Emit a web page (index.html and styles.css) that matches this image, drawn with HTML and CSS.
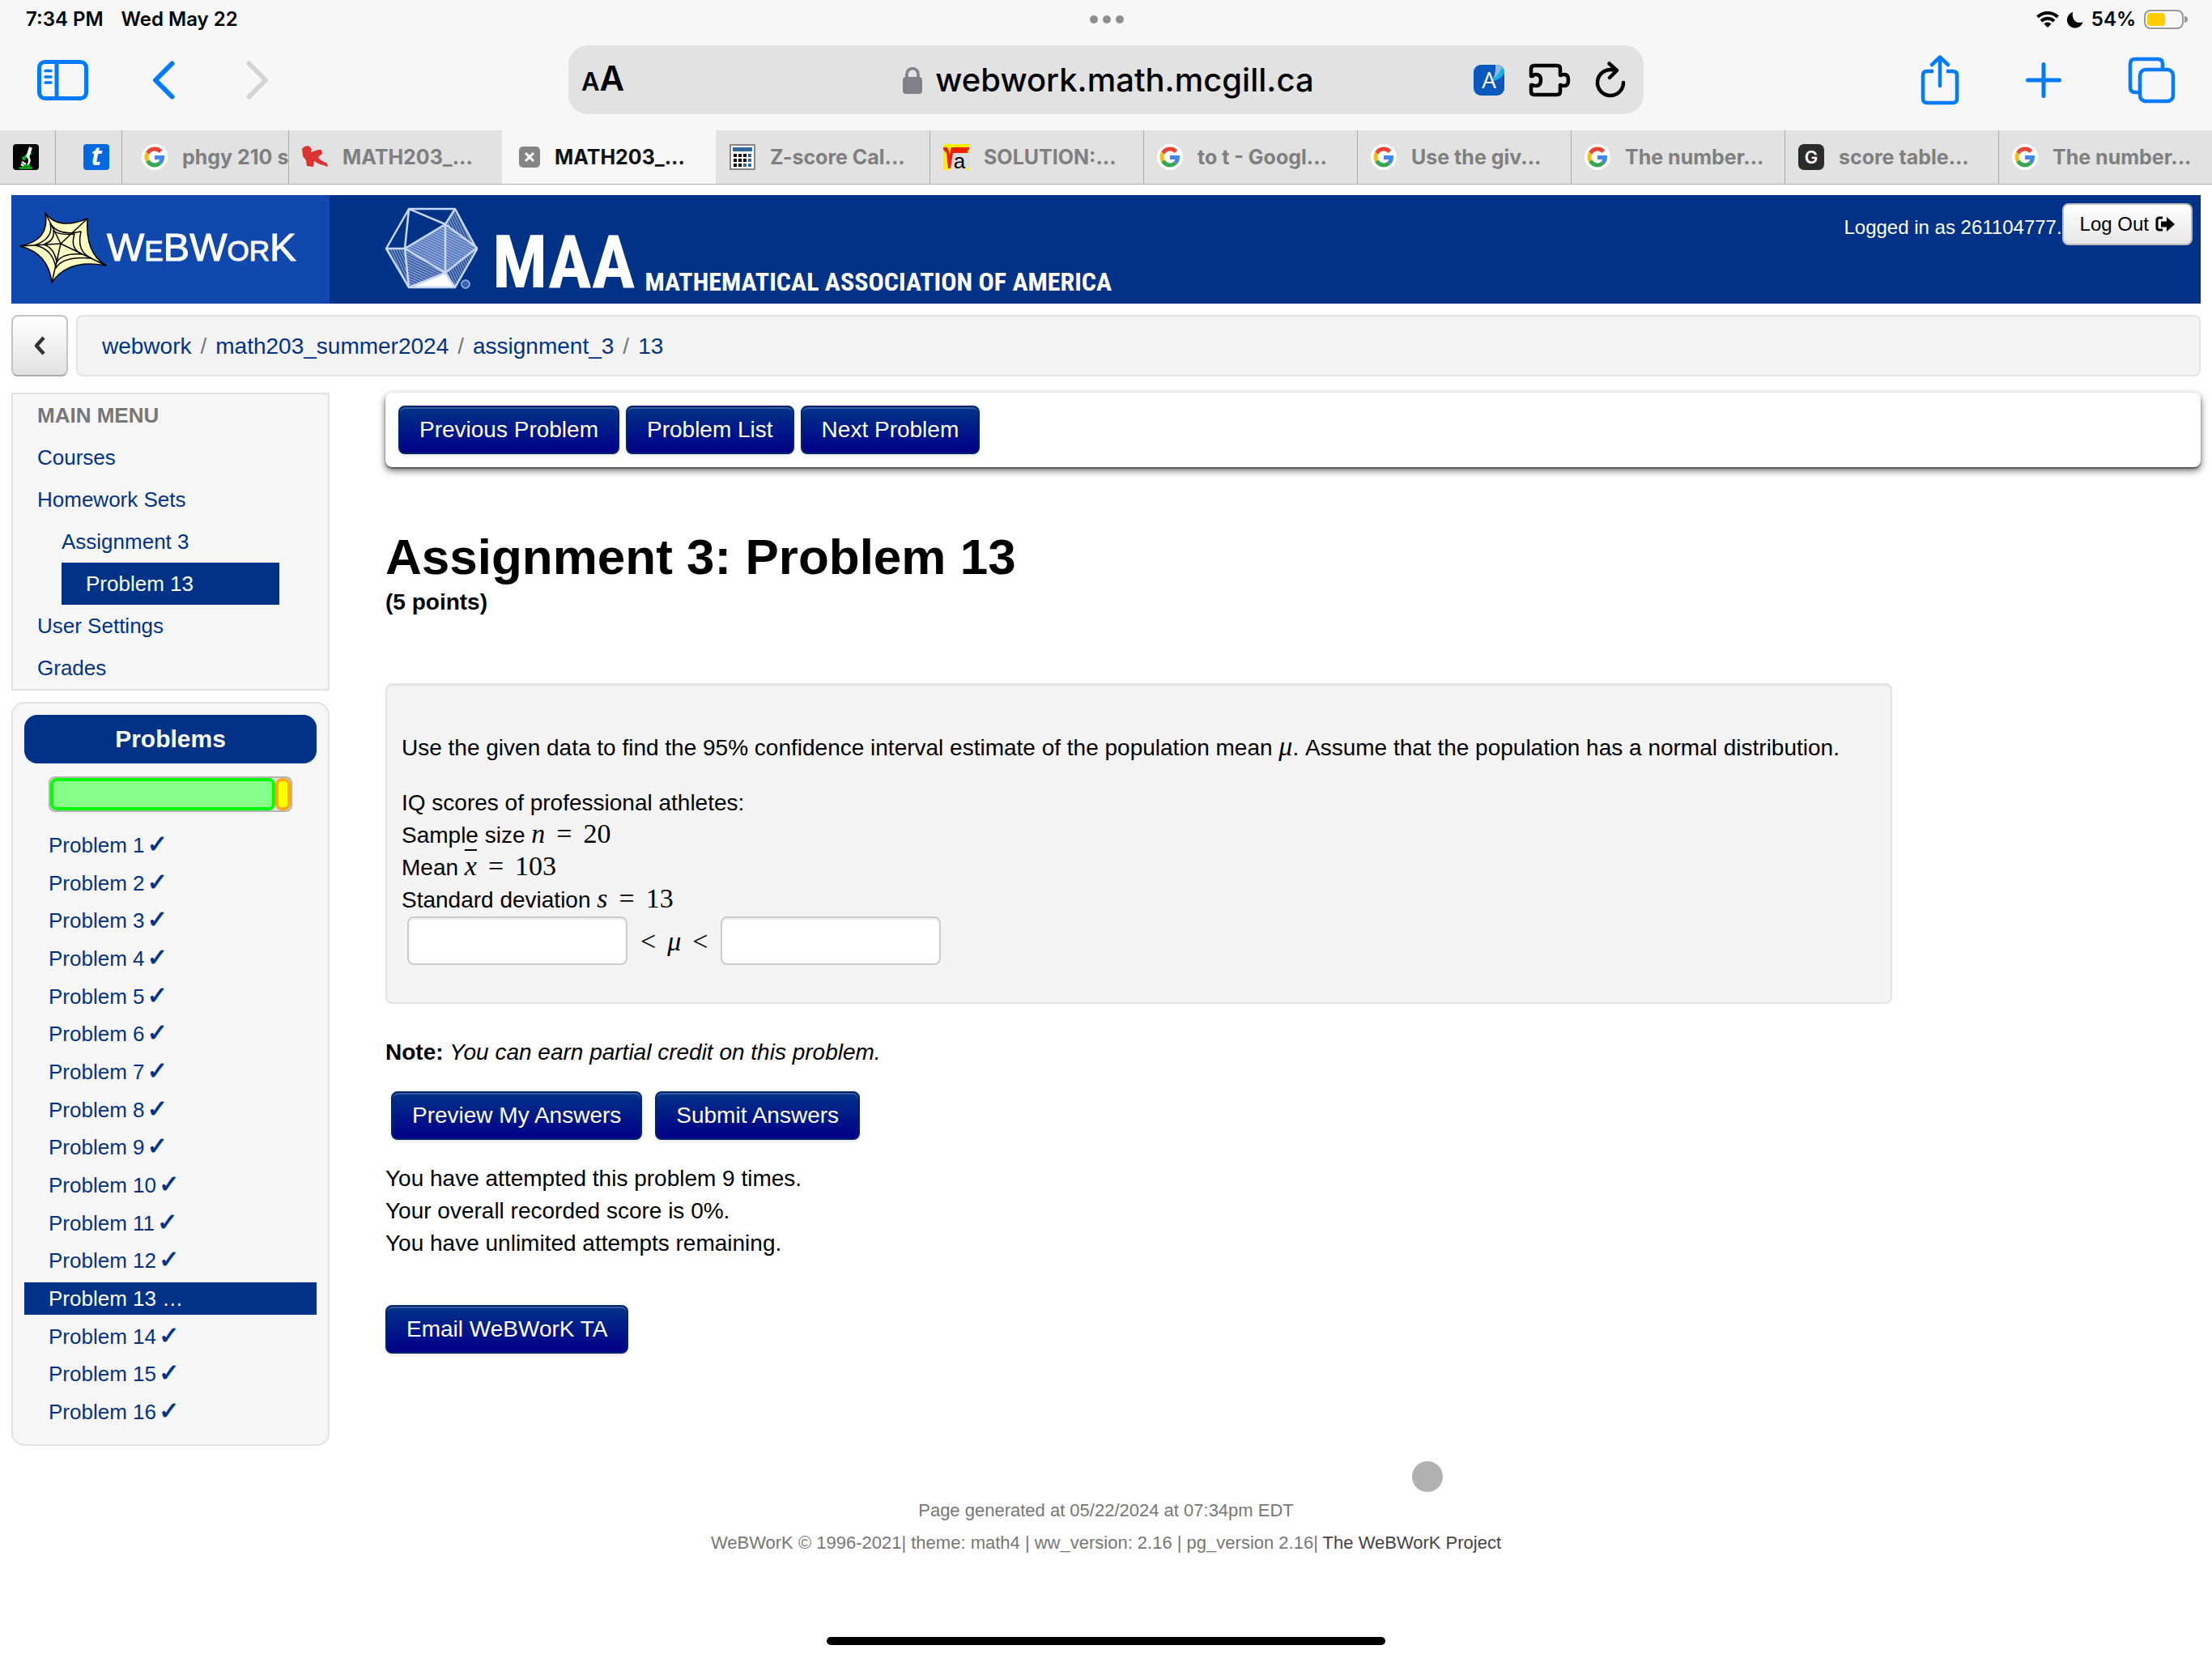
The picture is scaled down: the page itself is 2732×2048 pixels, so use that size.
FILE: index.html
```html
<!DOCTYPE html>
<html lang="en">
<head>
<meta charset="utf-8">
<title>WeBWorK : math203_summer2024 : assignment_3 : 13</title>
<link rel="stylesheet" href="styles.css">
</head>
<body>
<svg class="defs" aria-hidden="true">
  <symbol id="google" viewBox="0 0 32 32">
    <circle cx="16" cy="16" r="16" fill="#fff"/>
    <g fill="none" stroke-width="5">
      <path d="M23.5 9.2A10 10 0 0 0 7.3 11.2" stroke="#ea4335"/>
      <path d="M7.3 11.2A10 10 0 0 0 7.3 20.8" stroke="#fbbc05"/>
      <path d="M7.3 20.8A10 10 0 0 0 22.6 23.4" stroke="#34a853"/>
      <path d="M22.6 23.4A9.600 9.600 0 0 0 25.500 16.400H16" stroke="#4285f4"/>
    </g>
  </symbol>
</svg>

<header class="browser">
  <div class="status">
    <div class="clock"><span>7:34 PM</span><span>Wed May 22</span></div>
    <div class="dots"><i></i><i></i><i></i></div>
    <div class="indicators">
      <svg width="28" height="20" viewBox="0 0 28 20"><g fill="none" stroke="#000" stroke-width="4"><path d="M1.500 7A18 18 0 0 1 26.500 7"/><path d="M6 12A11.500 11.500 0 0 1 22 12"/></g><path d="M14 20l-4.500-4.600a6.500 6.500 0 0 1 9 0z"/></svg>
      <svg width="20" height="20" viewBox="0 0 20 20"><path d="M7 1A10 10 0 1 0 19.500 13.500Q12 15 9 11 6 7 7 1z"/></svg>
      <span>54%</span>
      <svg width="54" height="24" viewBox="0 0 54 24"><rect x="1" y="1" width="47" height="22" rx="7" fill="none" stroke="#999" stroke-width="2"/><rect x="4" y="4" width="22" height="16" rx="4" fill="#fc0"/><path d="M50 8a4 4 0 0 1 0 8z" fill="#999"/></svg>
    </div>
  </div>
  <div class="toolbar">
    <div class="tools">
      <button class="tool" aria-label="Sidebar"><svg width="64" height="50" viewBox="0 0 64 50"><g fill="none" stroke="#007aff" stroke-width="5"><rect x="2.500" y="2.500" width="58" height="45" rx="7"/><path d="M24 2v46"/></g><path d="M10 13.500h7M10 21h7M10 28h7" stroke="#007aff" stroke-width="3.500" stroke-linecap="round"/></svg></button>
      <button class="tool" aria-label="Back"><svg width="28" height="48" viewBox="0 0 28 48"><path d="M24.500 3.500L4 24l20.500 20.500" fill="none" stroke="#007aff" stroke-width="6" stroke-linecap="round" stroke-linejoin="round"/></svg></button>
      <button class="tool" aria-label="Forward" disabled><svg width="28" height="48" viewBox="0 0 28 48"><path d="M3.500 3.500L24 24 3.500 44.500" fill="none" stroke="#d4d4d6" stroke-width="6" stroke-linecap="round" stroke-linejoin="round"/></svg></button>
    </div>
    <div class="address">
      <button class="tool reader" aria-label="Page settings"><span class="small-a">A</span><span class="big-a">A</span></button>
      <div class="host">
        <svg width="24" height="34" viewBox="0 0 24 34"><rect y="13" width="24" height="21" rx="4" fill="#808086"/><path d="M5 15V9.500a7 7 0 0 1 14 0V15" fill="none" stroke="#808086" stroke-width="3.500"/></svg>
        <span>webwork.math.mcgill.ca</span>
      </div>
      <div class="extras">
        <svg width="38" height="38" viewBox="0 0 38 38"><rect width="38" height="38" rx="9" fill="#0a57bd"/><path d="M27 0h2a9 9 0 0 1 9 9v1q-5 9-15 10Q28 11 27 0z" fill="#12b5ea"/><path d="M27 0h2q4 0 6 3-3 9-11 14 4-8 3-17z" fill="#8fb9d8"/><text x="19" y="29" class="ext-letter">A</text></svg>
        <svg width="52" height="42" viewBox="0 0 52 42"><path d="M3 16V7q0-4 4-4h28q4 0 4 4v8h1q1-1 4-1 5 0 5 7t-5 7q-3 0-4-1h-1v8q0 4-4 4H7q-4 0-4-4v-8h2q1 1 4 1 6 0 6-7t-6-7q-3 0-4 2z" fill="none" stroke="#000" stroke-width="4.500" stroke-linejoin="round"/></svg>
        <svg width="38" height="46" viewBox="0 0 38 46"><path d="M22 10.300A16 16 0 1 0 35 26" fill="none" stroke="#000" stroke-width="4.500" stroke-linecap="round"/><path d="M17.500 2.500L27 11l-9 9" fill="none" stroke="#000" stroke-width="4.500" stroke-linecap="round" stroke-linejoin="round"/></svg>
      </div>
    </div>
    <div class="tools tools-end">
      <button class="tool" aria-label="Share"><svg width="48" height="62" viewBox="0 0 48 62"><g fill="none" stroke="#007aff" stroke-width="4.500" stroke-linecap="round" stroke-linejoin="round"><path d="M16 20H8q-5 0-5 5v29q0 5 5 5h32q5 0 5-5V25q0-5-5-5h-8" stroke-linecap="butt"/><path d="M24 38V3M14 12L24 2.500 34 12"/></g></svg></button>
      <button class="tool" aria-label="New tab"><svg width="44" height="44" viewBox="0 0 44 44"><path d="M22 2.500v39M2.500 22h39" stroke="#007aff" stroke-width="5" stroke-linecap="round"/></svg></button>
      <button class="tool" aria-label="Tab overview"><svg width="58" height="58" viewBox="0 0 58 58"><g fill="none" stroke="#007aff" stroke-width="4.500"><path d="M13 44H9q-6 0-6-6V9q0-6 6-6h28q6 0 6 6v5"/><rect x="15" y="16" width="41" height="39" rx="7"/></g></svg></button>
    </div>
  </div>
  <nav class="tabs">
    <a class="tab tab-micro" href="#" aria-label="Microscope"><svg width="32" height="32" viewBox="0 0 32 32"><rect width="32" height="32" rx="4" fill="#050505"/><path d="M15 14l4 2M12 19l3-3M20 10l2 3" stroke="#0b1" stroke-width="4"/><path d="M22 4l-4 12" stroke="#fff" stroke-width="4"/><path d="M18 15q5 5 0 11M11 22l5 3M10 25l4 2" fill="none" stroke="#fff" stroke-width="2.500"/><path d="M8 29.500h16M13 26.500h8" stroke="#0b1" stroke-width="2.500"/></svg></a>
    <a class="tab tab-pin" href="#" aria-label="t"><svg width="32" height="32" viewBox="0 0 32 32"><rect width="32" height="32" rx="4" fill="#0069e0"/><text x="16" y="26" class="t-letter">t</text></svg></a>
    <a class="tab tab-cut" href="#"><svg width="32" height="32"><use href="#google"/></svg><span>phgy 210 s</span></a>
    <a class="tab" href="#"><svg width="32" height="32" viewBox="0 0 32 32"><path d="M0 6l3-3 5-1 4 4-1 4 9-3h4l1 5-5 4 2 3 9 5 1 4-6-2-4-1-7-4-1 7-8-1-1-7-4-5z" fill="#dd3333"/></svg><span>MATH203_...</span></a>
    <a class="tab tab-active" href="#" aria-current="page"><svg class="close" width="26" height="26" viewBox="0 0 26 26"><rect width="26" height="26" rx="5" fill="#858585"/><path d="M8 8l10 10M18 8L8 18" stroke="#fff" stroke-width="3"/></svg><span>MATH203_...</span></a>
    <a class="tab" href="#"><svg width="32" height="32" viewBox="0 0 32 32"><rect x="1" y="1" width="30" height="30" fill="#fff" stroke="#888" stroke-width="2"/><path d="M4 4h24v5H4z" fill="#369"/><path d="M5 12h4v4H5zm6 0h4v4h-4zm6 0h4v4h-4zM5 18h4v4H5zm6 0h4v4h-4zm6 0h4v4h-4zM5 24h4v4H5zm6 0h4v4h-4z"/><path d="M23 12h4v4h-4zm0 6h4v4h-4zm-6 6h4v4h-4zm6 0h4v4h-4z" fill="#369"/></svg><span>Z-score Cal...</span></a>
    <a class="tab" href="#"><svg width="32" height="32" viewBox="0 0 32 32"><path d="M0 0h32v32H0z" fill="#fe0"/><path d="M9 11h23v17l-4 4H9z" fill="#ddd"/><path d="M0 4h5l3 8 2-8h22v3h-2v4H12L9 30H6L4 11 0 7z" fill="#e20"/><text x="20" y="30" class="root-letter">a</text></svg><span>SOLUTION:...</span></a>
    <a class="tab" href="#"><svg width="32" height="32"><use href="#google"/></svg><span>to t - Googl...</span></a>
    <a class="tab" href="#"><svg width="32" height="32"><use href="#google"/></svg><span>Use the giv...</span></a>
    <a class="tab" href="#"><svg width="32" height="32"><use href="#google"/></svg><span>The number...</span></a>
    <a class="tab" href="#"><svg width="32" height="32" viewBox="0 0 32 32"><rect width="32" height="32" rx="7" fill="#2b2b2b"/><text x="16" y="24" class="g-letter">G</text></svg><span>score table...</span></a>
    <a class="tab" href="#"><svg width="32" height="32"><use href="#google"/></svg><span>The number...</span></a>
  </nav>
</header>

<div class="page">
  <div class="masthead">
    <a class="webwork-logo" href="#">
      <svg width="110" height="90" viewBox="0 0 110 90"><g fill="#ffffc4" stroke="#000" stroke-width="1.500" stroke-linejoin="round"><path d="M32 2Q48 24 84 9 81 52 107 67 60 58 40 88 36 52 1 43 38 36 32 2z"/><g fill="none"><path d="M51 40L32 2M51 40L84 9M51 40l56 27M51 40L40 88M51 40L1 43"/><path d="M38 15q10 16 38 10Q70 50 89 58 54 55 45 70 41 46 19 42q24-9 19-27z"/><path d="M42 24q8 6 26 4-6 18 9 25-24-2-31 10-3-18-16-22 14-5 12-17z"/></g></g></svg>
      <span>W<small>E</small>BW<small>OR</small>K</span>
    </a>
    <a class="maa-logo" href="#">
      <svg width="116" height="102" viewBox="0 0 116 102">
        <defs>
          <pattern id="rules" width="3" height="3" patternUnits="userSpaceOnUse" patternTransform="rotate(25)"><path d="M0 1h3" stroke="#dfe8fb" stroke-width="1"/></pattern>
          <pattern id="rules-steep" width="3" height="3" patternUnits="userSpaceOnUse" patternTransform="rotate(65)"><path d="M0 1h3" stroke="#dfe8fb" stroke-width="1"/></pattern>
        </defs>
        <path d="M74 21L24 51l50 30 39-29z" fill="#3a62b4"/>
        <path d="M74 21L24 51l50 30 39-29z" fill="url(#rules)"/>
        <path d="M1 51h23l5 48zM86 2L74 21l39 31zM74 81l12 18 27-47z" fill="url(#rules-steep)"/>
        <path d="M24 51l5 48 45-18z" fill="#1a439a"/><path d="M24 51l5 48 45-18z" fill="url(#rules)"/>
        <path d="M29 99l45-18 12 18z" fill="#fff"/>
        <path d="M29 2h57l27 50-27 47H29L1 51zM29 2l45 19L86 2M29 2l-5 49H1M74 21L24 51l50 30 39-31zM74 21v60M24 51l5 48 45-18 12 18" fill="none" stroke="#c8d7f5" stroke-width="2.500" stroke-linejoin="round"/>
        <circle cx="99" cy="95" r="5" fill="#3a62b4" stroke="#a9bde6" stroke-width="1.500"/>
      </svg>
      <span class="maa">MAA</span>
      <span class="maa-name">MATHEMATICAL ASSOCIATION OF AMERICA</span>
    </a>
    <div class="login">
      <span>Logged in as 261104777.</span>
      <button class="logout">Log Out <svg width="24" height="20" viewBox="0 0 24 20"><path d="M9 2H5Q2 2 2 5v9q0 3 3 3h4" fill="none" stroke="#000" stroke-width="3"/><path d="M7 6.500h7V1l10 9-10 9v-5.500H7z"/></svg></button>
    </div>
  </div>

  <div class="crumbs-row">
    <button class="up" aria-label="Up one level"><svg width="16" height="26" viewBox="0 0 16 26"><path d="M13 3L4 13l9 10" fill="none" stroke="#333" stroke-width="4.500" stroke-linejoin="round"/></svg></button>
    <nav class="crumbs"><a href="#">webwork</a><i>/</i><a href="#">math203_summer2024</a><i>/</i><a href="#">assignment_3</a><i>/</i><a href="#">13</a></nav>
  </div>

  <div class="columns">
    <aside class="side">
      <nav class="menu">
        <h2>MAIN MENU</h2>
        <a href="#">Courses</a>
        <a href="#">Homework Sets</a>
        <a class="level-2" href="#">Assignment 3</a>
        <a class="level-3" href="#">Problem 13</a>
        <a href="#">User Settings</a>
        <a href="#">Grades</a>
      </nav>
      <nav class="problems">
        <h2>Problems</h2>
        <div class="meter"><div class="meter-done" style="width: 93.75%"></div><div class="meter-open" style="width: 6.25%"></div></div>
        <ul>
          <li><a href="#">Problem 1 <b>✓</b></a></li>
          <li><a href="#">Problem 2 <b>✓</b></a></li>
          <li><a href="#">Problem 3 <b>✓</b></a></li>
          <li><a href="#">Problem 4 <b>✓</b></a></li>
          <li><a href="#">Problem 5 <b>✓</b></a></li>
          <li><a href="#">Problem 6 <b>✓</b></a></li>
          <li><a href="#">Problem 7 <b>✓</b></a></li>
          <li><a href="#">Problem 8 <b>✓</b></a></li>
          <li><a href="#">Problem 9 <b>✓</b></a></li>
          <li><a href="#">Problem 10 <b>✓</b></a></li>
          <li><a href="#">Problem 11 <b>✓</b></a></li>
          <li><a href="#">Problem 12 <b>✓</b></a></li>
          <li><a class="current" href="#">Problem 13 …</a></li>
          <li><a href="#">Problem 14 <b>✓</b></a></li>
          <li><a href="#">Problem 15 <b>✓</b></a></li>
          <li><a href="#">Problem 16 <b>✓</b></a></li>
        </ul>
      </nav>
    </aside>

    <main class="content">
      <div class="problem-nav">
        <button class="btn">Previous Problem</button>
        <button class="btn">Problem List</button>
        <button class="btn">Next Problem</button>
      </div>
      <h1>Assignment 3: Problem 13</h1>
      <p class="points">(5 points)</p>
      <form onsubmit="return false">
        <section class="statement">
          <p class="lead">Use the given data to find the 95% confidence interval estimate of the population mean <var>μ</var>. Assume that the population has a normal distribution.</p>
          <p>IQ scores of professional athletes:</p>
          <p>Sample size <span class="math"><var>n</var><span>=</span><span>20</span></span></p>
          <p>Mean <span class="math"><var class="bar">x</var><span>=</span><span>103</span></span></p>
          <p>Standard deviation <span class="math"><var>s</var><span>=</span><span>13</span></span></p>
          <div class="answers">
            <input type="text" aria-label="Lower bound">
            <span class="math"><span>&lt;</span><var>μ</var><span>&lt;</span></span>
            <input type="text" aria-label="Upper bound">
          </div>
        </section>
        <p class="note"><strong>Note:</strong> <em>You can earn partial credit on this problem.</em></p>
        <div class="submit">
          <button class="btn">Preview My Answers</button>
          <button class="btn">Submit Answers</button>
        </div>
      </form>
      <p class="attempts">You have attempted this problem 9 times.<br>Your overall recorded score is 0%.<br>You have unlimited attempts remaining.</p>
      <button class="btn">Email WeBWorK TA</button>
    </main>
  </div>

  <footer class="footer">
    <p>Page generated at 05/22/2024 at 07:34pm EDT</p>
    <p>WeBWorK © 1996-2021| theme: math4 | ww_version: 2.16 | pg_version 2.16| <a href="#">The WeBWorK Project</a></p>
  </footer>
</div>
<div class="pointer"></div>
<div class="home-bar"></div>
</body>
</html>
```
FILE: styles.css
```css
* { box-sizing: border-box; }
body {
  margin: 0;
  min-height: 100vh;
  position: relative;
  background: #fff;
  color: #000;
  font: 28px/40px "Liberation Sans", Arial, sans-serif;
}
h1, h2, p, ul { margin: 0; padding: 0; }
a { color: #038; text-decoration: none; }
button { font: inherit; color: inherit; margin: 0; }
svg { display: block; flex: none; overflow: visible; }
.defs { position: absolute; width: 0; height: 0; }

/* Browser chrome */
.browser { background: #f7f7f7; font-family: Inter, sans-serif; }
.status {
  display: grid;
  grid-template-columns: 1fr auto 1fr;
  align-items: center;
  height: 48px;
  padding: 0 30px 0 32px;
  font-size: 24px;
  font-weight: 600;
}
.clock { display: flex; gap: 22px; }
.dots { display: flex; gap: 6px; }
.dots i { width: 10px; height: 10px; border-radius: 50%; background: #8e8e8e; }
.indicators { display: flex; align-items: center; justify-content: flex-end; gap: 10px; }
.toolbar {
  display: grid;
  grid-template-columns: 1fr 1328px 1fr;
  align-items: center;
  height: 113px;
  padding: 0 46px 12px;
}
.tools { display: flex; align-items: center; gap: 78px; }
.tools .tool:last-child { margin-left: 10px; }
.tools-end { justify-content: flex-end; gap: 82px; }
.tools-end .tool:last-child { margin-left: 0; }
.tool { display: flex; padding: 0; border: 0; background: none; }
.address {
  display: grid;
  grid-template-columns: 1fr auto 1fr;
  align-items: center;
  height: 85px;
  padding: 0 22px 0 16px;
  border-radius: 24px;
  background: #e2e2e3;
}
.reader { align-items: baseline; font-weight: 600; }
.small-a { font-size: 31px; }
.big-a { font-size: 42px; }
.host { display: flex; align-items: center; gap: 16px; padding-left: 12px; font-size: 40px; font-weight: 500; }
.extras { display: flex; align-items: center; justify-content: flex-end; gap: 30px; }
.ext-letter, .t-letter, .g-letter, .root-letter { text-anchor: middle; fill: #fff; }
.ext-letter { font: 28px "Open Sans", sans-serif; }
.t-letter { font: italic bold 32px "Open Sans", sans-serif; }
.g-letter { font: 600 22px Inter, sans-serif; }
.root-letter { font: 26px "Liberation Sans", sans-serif; fill: #000; }
.tabs { display: flex; height: 67px; border-bottom: 1px solid #aeaeb0; }
.tab {
  display: flex;
  flex: 1 1 264px;
  align-items: center;
  gap: 18px;
  min-width: 0;
  padding: 0 0 0 16px;
  border-left: 1px solid #aeaeae;
  background: #e2e2e2;
  color: #7f7f7f;
  font-size: 25px;
  font-weight: 700;
  white-space: nowrap;
}
.tab-micro { flex: 0 0 68px; border-left: 0; }
.tab-pin { flex: 0 0 82px; padding-left: 34px; }
.tab-cut { flex: 0 0 206px; padding-left: 24px; }
.tab-active { padding-left: 20px; background: #f7f7f7; color: #111; }
.tab-active, .tab-active + .tab { border-left-color: transparent; }

/* WeBWorK page */
.page { padding: 13px 14px 0; }
.masthead { display: flex; height: 134px; background: #038; }
.webwork-logo {
  display: flex;
  align-items: center;
  width: 393px;
  padding: 0 0 2px 10px;
  background: #1048ae;
  color: #fff;
  font-size: 49px;
}
.webwork-logo span { -webkit-text-stroke: 1px #fff; margin-left: -2px; }
.webwork-logo svg { margin-top: -2px; }
.webwork-logo small { font-size: 35px; }
.maa-logo {
  display: flex;
  align-items: flex-end;
  margin-left: 69px;
  padding-bottom: 17px;
  color: #fff;
  font-family: "Liberation Sans Narrow", "Roboto Condensed", "Open Sans Condensed", "Liberation Sans", sans-serif;
  font-weight: 700;
}
.maa { margin-left: 16px; font-size: 90px; line-height: 66px; }
.maa-name { margin-left: 12px; font-size: 32px; line-height: 20px; }
.login { display: flex; align-items: flex-start; margin-left: auto; padding: 10px 10px 0 0; color: #fff; font-size: 24px; }
.login span { padding-top: 10px; }
.logout {
  display: flex;
  align-items: center;
  gap: 8px;
  height: 52px;
  padding: 0 20px;
  border: 2px solid #bbb;
  border-radius: 8px;
  background: linear-gradient(#fff, #e6e6e6);
  color: #000;
}
.crumbs-row { display: flex; gap: 10px; margin-top: 14px; }
.up {
  display: flex;
  align-items: center;
  justify-content: center;
  width: 70px;
  border: 2px solid #c4c4c4;
  border-bottom-color: #aaa;
  border-radius: 8px;
  background: linear-gradient(#fff, #e1e1e1);
}
.crumbs { display: flex; flex: 1; gap: 11px; padding: 17px 30px 15px; border: 2px solid #e3e3e3; border-radius: 8px; background: #f4f4f4; }
.crumbs i { font-style: normal; color: #777; }
.columns { display: flex; gap: 69px; margin-top: 20px; }
.side { flex: 0 0 393px; font-size: 26px; }
.menu { padding: 0 60px 0 30px; border: 2px solid #e3e3e3; background: #f6f6f6; line-height: 52px; }
.menu h2 { color: #777; font-size: 26px; }
.menu a { display: block; }
.menu .level-2 { margin-left: 30px; }
.menu .level-3 { margin-left: 30px; padding-left: 30px; background: #038; color: #fff; }
.problems { margin-top: 14px; padding: 14px 14px 20px; border: 2px solid #e3e3e3; border-radius: 16px; background: #f6f6f6; }
.problems h2 { border-radius: 16px; background: #038; color: #fff; font-size: 30px; line-height: 60px; text-align: center; }
.meter { display: flex; height: 44px; margin: 16px 30px 21px; border: 2px solid #b4b4b4; border-radius: 8px; background: #e0e0e0; }
.meter div { border-radius: 8px; }
.meter-done { border: 4px solid #0f0; background: #8f8; }
.meter-open { border: 4px solid #fa1; background: #ff0; }
.problems ul { display: flex; flex-direction: column; justify-content: space-between; min-height: 740px; list-style: none; }
.problems li a { display: block; padding-left: 30px; }
.problems b { margin-left: -4px; font: 30px/1px "DejaVu Sans", sans-serif; -webkit-text-stroke: 1px #038; }
.problems .current { background: #038; color: #fff; }

.content { flex: 1; min-width: 0; }
.problem-nav { display: flex; gap: 8px; padding: 16px; border-radius: 8px; box-shadow: 0 4px 10px rgba(0, 0, 0, .6), 0 2px 2px rgba(0, 0, 0, .4); }
.btn {
  height: 60px;
  padding: 0 24px;
  border: 2px solid #02246a;
  border-radius: 8px;
  background: linear-gradient(#038, #008);
  box-shadow: inset 0 2px 0 rgba(255, 255, 255, .2), 0 2px 4px rgba(0, 0, 0, .1);
  color: #fff;
}
h1 { margin-top: 75px; font-size: 62px; line-height: 72px; }
.points { font-weight: 700; }
.statement { width: 83%; margin-top: 80px; padding: 58px 18px 46px; border: 2px solid #e3e3e3; border-radius: 8px; background: #f4f4f4; box-shadow: inset 0 2px 2px rgba(0, 0, 0, .05); }
.lead { margin-bottom: 28px; }
var, .math { font-family: "Liberation Serif", serif; font-size: 34px; line-height: 1px; }
.math { display: inline-flex; gap: 14px; }
.bar { text-decoration: overline; text-decoration-thickness: 2px; }
.answers { display: flex; align-items: center; gap: 16px; padding-left: 7px; }
.answers input { width: 272px; height: 60px; padding: 8px 12px; border: 2px solid #ccc; border-radius: 8px; background: #fff; box-shadow: inset 0 2px 2px rgba(0, 0, 0, .08); font: inherit; }
.note { margin-top: 40px; }
.submit { display: flex; gap: 16px; margin-top: 28px; padding-left: 7px; }
.attempts { margin: 28px 0 56px; }
.footer { margin-top: 60px; color: #777; font-size: 22px; text-align: center; }
.footer a { color: #444; }

/* Overlays of the tablet */
.pointer { position: absolute; left: 1744px; top: 1805px; width: 38px; height: 38px; border-radius: 50%; background: #b1b1b1; }
.home-bar { position: absolute; left: 50%; bottom: 16px; width: 690px; height: 10px; margin-left: -345px; border-radius: 5px; background: #000; }
```
